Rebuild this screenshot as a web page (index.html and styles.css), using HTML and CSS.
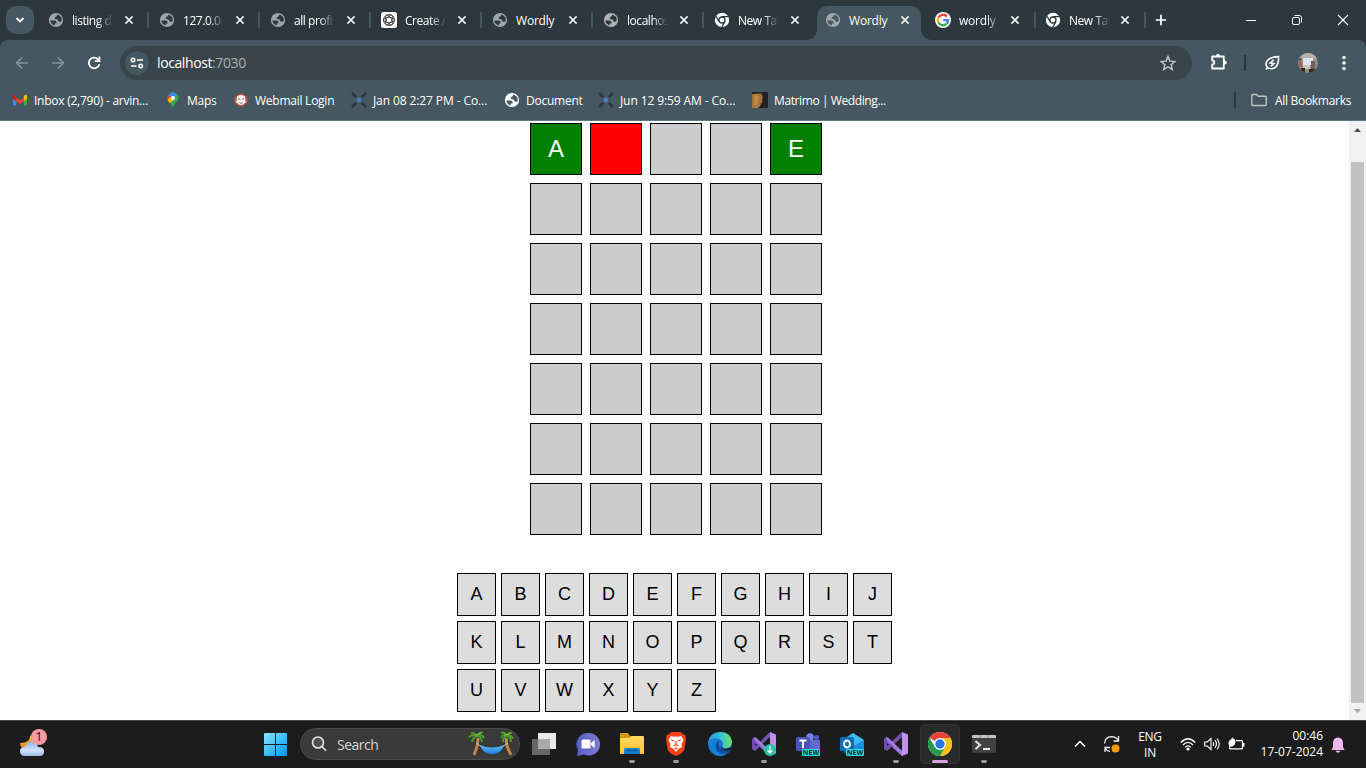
FILE: index.html
```html
<!DOCTYPE html>
<html lang="en">
<head>
<meta charset="utf-8">
<title>Wordly</title>
<link rel="stylesheet" href="styles.css">
</head>
<body>
<svg class="defs" width="0" height="0" aria-hidden="true">
  <defs>
    <linearGradient id="win" x1="0" y1="0" x2="1" y2="1"><stop offset="0" stop-color="#8ae2ff"/><stop offset=".5" stop-color="#3fc0fb"/><stop offset="1" stop-color="#0a94f4"/></linearGradient>
    <linearGradient id="cloud" x1="0" y1="0" x2="0" y2="1"><stop offset="0" stop-color="#8fb1ee"/><stop offset=".6" stop-color="#d3e1fa"/><stop offset="1" stop-color="#9dbcf2"/></linearGradient>
    <linearGradient id="moon" x1="0" y1="0" x2="0" y2="1"><stop offset="0" stop-color="#f6c83c"/><stop offset="1" stop-color="#ec8115"/></linearGradient>
    <linearGradient id="fold" x1="0" y1="0" x2="0" y2="1"><stop offset="0" stop-color="#ffda62"/><stop offset="1" stop-color="#fdc02f"/></linearGradient>
    <linearGradient id="chat" x1="0" y1="0" x2="1" y2="0"><stop offset="0" stop-color="#5661c4"/><stop offset="1" stop-color="#8278cf"/></linearGradient>
    <linearGradient id="edge" x1="0" y1="0" x2="1" y2="0"><stop offset="0" stop-color="#2295e2"/><stop offset=".5" stop-color="#35c1dc"/><stop offset="1" stop-color="#6de05e"/></linearGradient>
    <linearGradient id="vsr" x1="0" y1="0" x2="0" y2="1"><stop offset="0" stop-color="#b994ea"/><stop offset="1" stop-color="#c98ff5"/></linearGradient>
    <linearGradient id="ham" x1="0" y1="0" x2="0" y2="1"><stop offset="0" stop-color="#64bdf4"/><stop offset="1" stop-color="#1482e5"/></linearGradient>
  </defs>
  <symbol id="globe" viewBox="0 0 16 16"><circle cx="8" cy="8" r="7.1" fill="currentColor"/><path d="M2.3 8.600h4.200q2 .2 2 1.600v1.200H6.700v2.200Q3 12.700 2.300 8.600zM9.300 2.600q-.2 2-1.400 2.100-1.500.1-1.200 1.500.2 1.100 1.900 1.100 1.600.1 1.800 1.600.2 1.200 3 .7 1.700-4.800-4.100-7z" fill="var(--hole)"/></symbol>
  <symbol id="x" viewBox="0 0 10 10"><path d="M1.400 1.400l7.200 7.200M8.600 1.400L1.400 8.600" stroke="#eef2f3" stroke-width="1.600"/></symbol>
  <symbol id="mono" viewBox="0 0 16 16"><circle cx="8" cy="8" r="7.200" fill="#fff"/><circle cx="8" cy="8" r="3" fill="#fff" stroke="#2d383e" stroke-width="1.300"/><path d="M8 4.600h6.500M5.100 9.700L2 4.300M10.900 9.700l-3.100 5.300" stroke="#2d383e" stroke-width="1.300"/></symbol>
  <symbol id="cross" viewBox="0 0 16 16"><path d="M1 1l4.200 4.200M15 1l-4.200 4.200M1 15l4.200-4.200M15 15l-4.200-4.200" stroke="#2f3942" stroke-width="2.800"/><circle cx="8" cy="8" r="2.300" fill="#4b7bc8"/></symbol>
  <symbol id="vs" viewBox="0 0 24 24"><path d="M0 7l3-1.600L18 19v5L2 10z" fill="#8661c5"/><path d="M0 7l3-1.500V18.500L0 17z" fill="#6e4bb0"/><path d="M0 17l3 2L18 5V0z" fill="#7451b3"/><path d="M1 5.500h3L18 19v5z" fill="#a07fe0"/><path d="M18 0l6 2.600v18.800L18 24z" fill="url(#vsr)"/></symbol>
</svg>

<div class="browser">
  <header class="tabstrip">
    <button class="tab-search"><svg width="12" height="12" viewBox="0 0 12 12"><path d="M2.500 4L6 7.500 9.500 4" fill="none" stroke="#fff" stroke-width="1.900"/></svg></button>
    <div class="tabs">
      <div class="tab"><svg class="ico"><use href="#globe"/></svg><span class="title fade">listing d</span><svg class="close"><use href="#x"/></svg></div>
      <div class="tab"><svg class="ico"><use href="#globe"/></svg><span class="title fade">127.0.0.</span><svg class="close"><use href="#x"/></svg></div>
      <div class="tab"><svg class="ico"><use href="#globe"/></svg><span class="title fade">all profi</span><svg class="close"><use href="#x"/></svg></div>
      <div class="tab"><svg class="ico" viewBox="0 0 16 16"><rect width="16" height="16" rx="2.500" fill="#fff"/><g fill="none" stroke="#303030" stroke-width=".8"><circle cx="8" cy="8" r="5.600"/><ellipse cx="8" cy="8" rx="5.400" ry="2.700"/><ellipse cx="8" cy="8" rx="5.400" ry="2.700" transform="rotate(60 8 8)"/><ellipse cx="8" cy="8" rx="5.400" ry="2.700" transform="rotate(120 8 8)"/></g></svg><span class="title fade">Create A</span><svg class="close"><use href="#x"/></svg></div>
      <div class="tab"><svg class="ico"><use href="#globe"/></svg><span class="title">Wordly</span><svg class="close"><use href="#x"/></svg></div>
      <div class="tab"><svg class="ico warm"><use href="#globe"/></svg><span class="title fade">localhos</span><svg class="close"><use href="#x"/></svg></div>
      <div class="tab no-sep"><svg class="ico"><use href="#mono"/></svg><span class="title fade">New Tal</span><svg class="close"><use href="#x"/></svg></div>
      <div class="tab active"><svg class="ico"><use href="#globe"/></svg><span class="title">Wordly</span><svg class="close"><use href="#x"/></svg></div>
      <div class="tab narrow"><svg class="ico" viewBox="0 0 16 16"><circle cx="8" cy="8" r="8" fill="#fff"/><g fill="none" stroke-width="2.300"><path d="M12 4.600A5.200 5.200 0 0 0 3.400 5.600" stroke="#ea4335"/><path d="M3.400 5.600a5.200 5.200 0 0 0 0 4.800" stroke="#fbbc05"/><path d="M3.400 10.400a5.200 5.200 0 0 0 8.100 1.500" stroke="#34a853"/><path d="M11.500 11.900A5 5 0 0 0 13.100 8.100H8.200" stroke="#4285f4"/></g></svg><span class="title fade slight">wordly</span><svg class="close"><use href="#x"/></svg></div>
      <div class="tab narrow"><svg class="ico"><use href="#mono"/></svg><span class="title fade">New Tal</span><svg class="close"><use href="#x"/></svg></div>
    </div>
    <svg class="new-tab" viewBox="0 0 12 12"><path d="M6 .8v10.400M.8 6h10.400" stroke="#fff" stroke-width="1.700"/></svg>
    <div class="window-controls">
      <svg viewBox="0 0 12 12"><path d="M1 6.500h10" stroke="#fff"/></svg>
      <svg viewBox="0 0 12 12" fill="none" stroke="#fff"><rect x="1.500" y="3.500" width="7" height="7" rx="1.500"/><path d="M3.500 1.500h5q2 0 2 2v5"/></svg>
      <svg viewBox="0 0 12 12"><path d="M1 1l10 10M11 1L1 11" stroke="#fff" stroke-width="1.100"/></svg>
    </div>
  </header>

  <div class="chrome-panel">
    <div class="toolbar">
      <svg class="nav dim" viewBox="0 0 14 14"><path d="M13 7H1.800M7 1.600L1.600 7 7 12.400" /></svg>
      <svg class="nav dim" viewBox="0 0 14 14"><path d="M1 7h11.200M7 1.600L12.400 7 7 12.400"/></svg>
      <svg class="nav" viewBox="0 0 14 14"><path d="M12.300 8.200A5.300 5.300 0 1 1 11 3.300L12.300 4.600M12.400 .6v4.600H7.800"/></svg>
      <div class="omnibox">
        <span class="site"><svg width="14" height="12" viewBox="0 0 14 12" fill="none" stroke="#fff" stroke-width="1.600"><circle cx="3" cy="3" r="1.700"/><path d="M7 3h6M1 9h5.500"/><circle cx="10.700" cy="9" r="1.700"/></svg></span>
        <span class="url">localhost<span>:7030</span></span>
        <svg class="star" viewBox="0 0 16 16"><path d="M8 1.500l1.900 4.600 4.900.4-3.700 3.200 1.100 4.800L8 11.900l-4.200 2.600 1.100-4.800L1.200 6.500l4.900-.4z" fill="none" stroke="#c3c6c8" stroke-width="1.400"/></svg>
      </div>
      <svg class="puzzle" viewBox="0 0 18 18"><path d="M2.200 3.500h11.600v12H2.200v-4q2.100-.1 2.100-2T2.200 7.500z" fill="none" stroke="#fff" stroke-width="1.800" stroke-linejoin="round"/><path d="M5.800 3.200q.3-2.500 2.200-2.500t2.200 2.500zM14 7.200q2.900.3 2.900 2.300T14 11.800z" fill="#fff"/></svg>
      <i class="vline"></i>
      <svg class="leaf" viewBox="0 0 16 16" fill="none" stroke="#fff"><path d="M2 14.600l1.500-2C-.2 8 3.500 1.700 14.500 1.600c.5 8.500-3.500 14.700-11 11" stroke-width="1.600"/><path d="M9.700 4.800L6.200 8.200l4 .2-3.500 3" stroke-width="1.500"/></svg>
      <svg class="avatar" viewBox="0 0 20 20"><defs><clipPath id="av"><circle cx="10" cy="10" r="10"/></clipPath></defs><g clip-path="url(#av)"><path d="M0 0h20v20H0z" fill="#9b8a80"/><path d="M0 0h20v6L10 5 4 8H0z" fill="#b9b0a9"/><path d="M5 5h10v7H5z" fill="#dce3ec"/><path d="M1 9h3v5H1zM8 12h3v3H8z" fill="#a4605b"/><path d="M5 12h7v4H5z" fill="#c9c3be"/><path d="M13 8h4v9h-4z" fill="#6a625b"/><path d="M3 15h4v5H3zM11 16h7v4h-7z" fill="#34291f"/><path d="M0 5h4v3H0z" fill="#6f6260"/></g></svg>
      <svg class="dots" viewBox="0 0 4 16"><g fill="#fff"><circle cx="2" cy="2.500" r="1.700"/><circle cx="2" cy="8" r="1.700"/><circle cx="2" cy="13.500" r="1.700"/></g></svg>
    </div>
    <nav class="bookmarks">
      <a><svg viewBox="0 0 16 16"><path d="M1 4v9.500h3.200V7z" fill="#4285f4"/><path d="M11.800 7v6.500H15V4z" fill="#34a853"/><path d="M1 3.500L8 8.500l7-5V7l-7 5L1 7z" fill="#ea4335"/><path d="M1 3.500q1-1.500 3.200.3V9L1 7z" fill="#c5221f"/><path d="M15 3.500q-1-1.500-3.200.3V9L15 7z" fill="#fbbc04"/></svg><span>Inbox (2,790) - arvin...</span></a>
      <a><svg viewBox="0 0 16 16"><path d="M8 .5a5.500 5.500 0 0 0-5.500 5.500Q2.500 9 5 11q2.300 2 3 5 .7-3 3-5.200 2.500-2.400 2.500-4.800A5.500 5.500 0 0 0 8 .5z" fill="#34a853"/><path d="M3.500 2.700L6 6 3 9Q1.500 5.500 3.500 2.700z" fill="#ea4335"/><path d="M2.600 7.500L6.500 5l3 2.500L5 11Q2.700 9 2.600 7.500z" fill="#fbbc04"/><path d="M3.800 2.500Q8-1.500 12.500 3L8.500 7 6 5.500z" fill="#4285f4"/><circle cx="8" cy="6" r="2" fill="#fff"/></svg><span>Maps</span></a>
      <a><svg viewBox="0 0 16 16"><circle cx="8" cy="8" r="6.200" fill="#b9867a" stroke="#a54a35" stroke-width="1.500"/><path d="M4 4.500q4-3 8 0v6q-4 5-8 0z" fill="#f4efee"/><path d="M5 7h2M9 7h2M6.500 11h3" stroke="#9b5f57"/><path d="M2.500 9l2 2M13.500 9l-2 2" stroke="#eee"/></svg><span>Webmail Login</span></a>
      <a class="wide"><svg><use href="#cross"/></svg><span>Jan 08 2:27 PM - Co...</span></a>
      <a><svg class="white"><use href="#globe"/></svg><span>Document</span></a>
      <a class="wide"><svg><use href="#cross"/></svg><span>Jun 12 9:59 AM - Co...</span></a>
      <a class="tight"><svg viewBox="0 0 16 16"><path d="M0 0h16v16H0z" fill="#232126"/><path d="M0 2l9-.5q3 3.500 1 6.500 1 2-1 4-1 3-3 4H0z" fill="#a87335"/><path d="M2 3l5 1-1 8-4 2z" fill="#bd8748"/></svg><span>Matrimo | Wedding...</span></a>
      <i class="vline"></i>
      <a class="all"><svg viewBox="0 0 16 16"><path d="M.8 12.500v-9q0-1 1-1h3.700l1.800 1.800h7q1 0 1 1v7.200q0 1-1 1H1.800q-1 0-1-1z" fill="none" stroke="#c0c3c4" stroke-width="1.400"/></svg><span>All Bookmarks</span></a>
    </nav>
  </div>

  <div class="viewport">
    <main class="page">
      <section class="board">
        <div class="cell hit">A</div><div class="cell miss"></div><div class="cell"></div><div class="cell"></div><div class="cell hit">E</div>
        <div class="cell"></div><div class="cell"></div><div class="cell"></div><div class="cell"></div><div class="cell"></div>
        <div class="cell"></div><div class="cell"></div><div class="cell"></div><div class="cell"></div><div class="cell"></div>
        <div class="cell"></div><div class="cell"></div><div class="cell"></div><div class="cell"></div><div class="cell"></div>
        <div class="cell"></div><div class="cell"></div><div class="cell"></div><div class="cell"></div><div class="cell"></div>
        <div class="cell"></div><div class="cell"></div><div class="cell"></div><div class="cell"></div><div class="cell"></div>
        <div class="cell"></div><div class="cell"></div><div class="cell"></div><div class="cell"></div><div class="cell"></div>
      </section>
      <section class="keyboard">
        <div class="key">A</div><div class="key">B</div><div class="key">C</div><div class="key">D</div><div class="key">E</div><div class="key">F</div><div class="key">G</div><div class="key">H</div><div class="key">I</div><div class="key">J</div>
        <div class="key">K</div><div class="key">L</div><div class="key">M</div><div class="key">N</div><div class="key">O</div><div class="key">P</div><div class="key">Q</div><div class="key">R</div><div class="key">S</div><div class="key">T</div>
        <div class="key">U</div><div class="key">V</div><div class="key">W</div><div class="key">X</div><div class="key">Y</div><div class="key">Z</div>
      </section>
    </main>
    <div class="scrollbar">
      <svg viewBox="0 0 17 17"><path d="M5 11l3.500-4 3.500 4z" fill="#505050"/></svg>
      <i class="thumb"></i>
      <svg viewBox="0 0 17 17"><path d="M5 6l3.500 4L12 6z" fill="#a3a3a3"/></svg>
    </div>
  </div>

  <footer class="taskbar">
    <div class="weather">
      <svg width="26" height="28" viewBox="0 0 26 28"><path d="M11 4q1 9-10 9 0 6 8 7l8-9q-5-2-6-7z" fill="url(#moon)"/><path d="M6 26q-5 0-5-5 0-4 5-4 2-6 7-5 5 0 6 5 6-.5 6 4.500 0 4.500-5 4.500z" fill="url(#cloud)"/></svg>
      <b class="badge">1</b>
    </div>
    <svg class="start" viewBox="0 0 23 23"><path d="M0 1q0-1 1-1h10v11H0zM12 0h10q1 0 1 1v10H12zM0 12h11v11H1q-1 0-1-1zM12 12h11v10q0 1-1 1H12z" fill="url(#win)"/></svg>
    <div class="search">
      <svg width="16" height="16" viewBox="0 0 16 16" fill="none" stroke="#e2e2e2" stroke-width="1.600"><circle cx="7" cy="6.500" r="5.500" fill="#505050"/><path d="M11 10.500l4 4.200"/></svg>
      <span>Search</span>
      <svg class="palms" width="46" height="26" viewBox="0 0 46 26"><path d="M10 7q0 8-4 17M38 7q0 8 5 17" fill="none" stroke="#c88748" stroke-width="2.800"/><path d="M8 12l6 4M40 12l-6 4" stroke="#b8c4cc"/><path d="M12 14q12 5 24 0-3 9-12 9t-12-9z" fill="url(#ham)"/><g fill="none" stroke="#4b9a2b" stroke-width="2"><path d="M9 5Q5 1 3 2.500M9 5Q3 3 1 6.500M9 5Q5 6 4 11M9 5q3-5 6-3M9 5q5-2 7 2M9 5q4 0 5 6M39 5q-3-5-6-3M39 5q-5-2-6 2M39 5q-4 1-4 6M39 5q2-5 5-2.500M39 5q4-1 6 2.500M39 5q4 1 4 6"/></g><path d="M7 4l6-1.500M36 4l6-1" stroke="#8cc63f" stroke-width="1.200"/></svg>
    </div>
    <div class="apps">
      <div class="app"><svg viewBox="0 0 24 24"><path d="M6 1h18v16H6z" fill="#e9e9e9"/><path d="M0 7h18v16H0z" fill="#747474" opacity=".85"/><path d="M6 7h12v10H6z" fill="#aaa"/></svg></div>
      <div class="app chat"><svg viewBox="0 0 24 24"><path d="M12 1a11.300 11.300 0 1 1-4 21.500L1 24l1-6A11.300 11.300 0 0 1 12 1z" fill="url(#chat)"/><rect x="5.500" y="7.500" width="9" height="9" rx="1.500" fill="#fff"/><path d="M15 11l3.700-3v8L15 13z" fill="#fff"/></svg></div>
      <div class="app open"><svg viewBox="0 0 24 24"><path d="M0 2q0-1 1-1h7l2 3v4H0z" fill="#d69b0d"/><path d="M0 6h9l2-2h12q1 0 1 1v17H0z" fill="url(#fold)"/><path d="M4 22v-4q0-2 2-2h12q2 0 2 2v4z" fill="#197fce"/><path d="M7 18.500h10" stroke="#0f5c9e" stroke-width="1.500"/></svg></div>
      <div class="app open"><svg viewBox="0 0 24 24"><path d="M7 0h10l2 2.500h2L22 6l-1.500 11q-1 4-8.500 7-7.500-3-8.500-7L2 6l1-3.500h2z" fill="#fa3e15"/><path d="M7 4l3 .8 2-.3 2 .3 3-.8 2.500 4-2 4 .5 3-3 1.500L12 20l-3-3.500L6 15l.5-3-2-4z" fill="#fff"/><path d="M7 8l3.500 1M17 8l-3.500 1M12 9v4M9.500 14l2.500-1.500 2.500 1.500M10.500 17l1.500-1 1.500 1" fill="none" stroke="#fa3e15" stroke-width="1.200"/></svg></div>
      <div class="app"><svg viewBox="0 0 24 24"><circle cx="12" cy="12" r="12" fill="#1674cf"/><path d="M.3 10Q2 0 12 0q11 0 12 9.500 0 6-6 6.500-4 0-3.500-2.300 1.500-2.200-.5-4.700Q7.500 3.200.3 10z" fill="url(#edge)"/><path d="M.2 10Q5 5 11 8q-4 3-3 8 2 6 8 7.300Q5 26 .8 15z" fill="#167fd7"/><path d="M11 8q-5 4-2.500 9.500Q12 24 20.500 20q2-1 2-2-5 2-9.500-1-4-3-2-9z" fill="#114a99"/><path d="M13 14q1 3 5 3 3.500 0 6-3-.5 2-1.500 4-5 2-9-1.500-1.500-1.500-.5-2.500z" fill="#1d1d1d"/></svg></div>
      <div class="app open"><svg viewBox="0 0 24 24"><use href="#vs" width="24" height="24"/><circle cx="18" cy="18" r="6" fill="#23bfa7"/><path d="M18 14v7M15.500 18.500L18 21l2.500-2.500" stroke="#fff" stroke-width="1.300" fill="none"/></svg></div>
      <div class="app"><svg viewBox="0 0 24 24"><circle cx="14" cy="5" r="3.700" fill="#7b83eb"/><circle cx="20.500" cy="5.500" r="2.600" fill="#5059c9"/><path d="M10 8h14v9q0 5-7 5t-7-5z" fill="#6169cf"/><rect y="5" width="14" height="14" rx="1.500" fill="#4b53bc"/><path d="M3.500 8.500h7M7 8.500V16" stroke="#fff" stroke-width="2"/></svg><b class="new">NEW</b></div>
      <div class="app"><svg viewBox="0 0 24 24"><path d="M4 7l9-6 11 7v13H4z" fill="#1264b5"/><path d="M7 5l6-4 11 7-9 6z" fill="#43b8ef"/><path d="M14 14L24 8v11H11z" fill="#1a8fe0"/><rect y="5" width="14" height="14" rx="1.500" fill="#0f6cbd"/><ellipse cx="7" cy="12" rx="3" ry="3.500" fill="none" stroke="#fff" stroke-width="1.900"/></svg><b class="new">NEW</b></div>
      <div class="app open"><svg><use href="#vs"/></svg></div>
      <div class="app current"><svg viewBox="0 0 24 24"><circle cx="12" cy="12" r="12" fill="#fff"/><path d="M12 12L1.600 6A12 12 0 0 1 22.400 6z" fill="#ea4335"/><path d="M12 6h10.400A12 12 0 0 1 12 24l5-9z" fill="#fbc116"/><path d="M1.600 6A12 12 0 0 0 12 24l5.200-9L7 15z" fill="#279847"/><circle cx="12" cy="12" r="6" fill="#fff"/><circle cx="12" cy="12" r="4.700" fill="#2b78e4"/></svg></div>
      <div class="app open"><svg viewBox="0 0 24 24"><rect y="3" width="24" height="18" rx="1" fill="#414141"/><path d="M0 6V4q0-1 1-1h22q1 0 1 1v2z" fill="#c4c4c4"/><path d="M8 3v3M16 3v3" stroke="#888"/><path d="M3.500 9l4.500 4-4.500 4" fill="none" stroke="#ddd" stroke-width="2.200"/><path d="M11 17h7" stroke="#fff" stroke-width="1.800"/></svg></div>
    </div>
    <div class="tray">
      <svg class="chev" viewBox="0 0 12 12"><path d="M1 8.500l5-5 5 5" fill="none" stroke="#fff" stroke-width="1.500"/></svg>
      <svg class="sync" viewBox="0 0 18 18"><g fill="none" stroke="#f2f2f2" stroke-width="1.300"><path d="M1.500 8.500Q2 2 8.500 1.700q4.500 0 7 4M15.500 1v5h-5M2 17v-4.500h5M2 13q2 3 5 3.700"/></g><circle cx="12.500" cy="13.500" r="4" fill="#ff9a0c"/></svg>
      <div class="lang">ENG<br>IN</div>
      <svg class="wifi" viewBox="0 0 16 14"><g fill="none" stroke="#fff" stroke-width="1.300"><path d="M.8 5.500q7.200-7.500 14.400 0M3 8q5-5.200 10 0M5.200 10.400q2.800-3 5.600 0"/></g><circle cx="8" cy="12" r="1.600" fill="#fff"/></svg>
      <svg class="sound" viewBox="0 0 16 14"><g fill="none" stroke="#fff" stroke-width="1.100"><path d="M.7 5v4h2.500L7 12.500v-11L3.200 5z"/><path d="M9 5q1.500 2 0 4M11 3.200q3 3.800 0 7.600M13 1.500q4.500 5.500 0 11"/></g></svg>
      <svg class="battery" viewBox="0 0 17 14"><path d="M8 3.600h5.500q1 0 1 1v6.300q0 1-1 1H3q-1.500 0-1.500-1.500" fill="none" stroke="#fff" stroke-width="1.300"/><path d="M14.800 6h1.700v3.500h-1.700z" fill="#fff"/><path d="M1 8.500Q-.8 4 4.500 1L5 .3 5.500 2 7 2.500Q8.500 8 4 9.500l-2 .2-1 1.800z" fill="#fff"/></svg>
      <div class="clock">00:46<br>17-07-2024</div>
      <svg class="bell" viewBox="0 0 14 16"><path d="M7 .5q4.800.3 5 5.500v4l1.600 3H.4L2 10V6Q2.200.8 7 .5zM4.500 13.800h5Q9 15.700 7 15.700t-2.500-1.900z" fill="#f1b9f1"/></svg>
    </div>
  </footer>
</div>
</body>
</html>
```
FILE: styles.css
```css
* { box-sizing: border-box; }
body { margin: 0; overflow: hidden; font-family: "Open Sans", "Noto Sans", sans-serif; font-size: 12px; color: #fff; }
.defs { position: absolute; }
svg { display: block; flex: none; }
button { border: 0; padding: 0; }

.browser { width: 1366px; height: 768px; display: flex; flex-direction: column; background: #2d383e; --hole: #2d383e; }

/* Tab strip */
.tabstrip { height: 40px; display: flex; align-items: center; }
.tab-search { width: 28px; height: 28px; margin: 0 7px 0 6px; border-radius: 10px; background: #455760; display: grid; place-items: center; }
.tabs { display: flex; height: 40px; }
.tab { position: relative; width: 111px; height: 40px; padding-left: 7px; display: flex; align-items: center; }
.tab.narrow { width: 110px; }
.tab:not(.active):not(.no-sep)::after { content: ""; position: absolute; left: 106px; top: 12px; width: 2px; height: 16px; background: #455760; }
.ico { width: 16px; height: 16px; color: #a0a4ab; }
.ico.warm { color: #b4b2b1; }
.title { width: 42px; margin-left: 8px; line-height: 18px; white-space: nowrap; letter-spacing: -0.2px; padding-top: 1px; }
.fade { letter-spacing: -0.45px; -webkit-mask-image: linear-gradient(90deg, #000 60%, transparent 98%); mask-image: linear-gradient(90deg, #000 60%, transparent 98%); }
.fade.slight { letter-spacing: -0.2px; -webkit-mask-image: linear-gradient(90deg, #000 65%, #0004 90%); mask-image: linear-gradient(90deg, #000 65%, #0004 90%); }
.close { width: 10px; height: 10px; margin-left: 10px; }
.tab.narrow .close, .tab.active .close { margin-left: 9px; }
.tab.active { width: 110px; --hole: #455760; z-index: 0; }
.tab.active::before { content: ""; position: absolute; z-index: -1; left: -1px; top: 6px; width: 104px; height: 34px; border-radius: 10px 10px 0 0; background: #455760; }
.tab.active::after { content: ""; position: absolute; z-index: -1; left: -11px; bottom: 0; width: 124px; height: 10px; background: radial-gradient(circle at 0 0, transparent 9.500px, #455760 10px) left / 10px 10px no-repeat, radial-gradient(circle at 100% 0, transparent 9.500px, #455760 10px) right / 10px 10px no-repeat; }
.new-tab { width: 12px; height: 12px; margin-left: 7px; }
.window-controls { margin-left: auto; padding-right: 17px; display: flex; gap: 34px; }
.window-controls svg { width: 12px; height: 12px; }

/* Toolbar and bookmarks */
.chrome-panel { height: 81px; background: #455760; border-bottom: 1px solid #667681; border-radius: 8px 8px 0 0; --hole: #455760; }
.toolbar { height: 46px; display: flex; align-items: center; padding-left: 15px; }
.nav { width: 14px; height: 14px; margin-right: 22px; fill: none; stroke: #fff; stroke-width: 1.800; }
.nav.dim { stroke: #87939a; stroke-width: 1.600; }
.nav:nth-child(3) { margin-right: 19px; }
.omnibox { width: 1072px; height: 34px; padding: 0 16px 0 5px; border-radius: 17px; background: #39444b; display: flex; align-items: center; }
.site { width: 24px; height: 24px; border-radius: 50%; background: #455760; display: grid; place-items: center; }
.url { margin-left: 8px; padding-bottom: 1px; font-size: 14px; letter-spacing: -0.4px; }
.url span { color: #a5adb1; }
.star { width: 16px; height: 16px; margin-left: auto; }
.puzzle { width: 18px; height: 18px; margin: 0 0 2px 18px; }
.vline { width: 2px; height: 16px; background: #2d383e; }
.toolbar .vline { margin-left: 16px; }
.leaf { width: 16px; height: 16px; margin-left: 18px; }
.avatar { width: 20px; height: 20px; margin-left: 18px; }
.dots { width: 4px; height: 16px; margin-left: 24px; }
.bookmarks { height: 28px; padding-left: 12px; display: grid; grid-template-columns: 153px 68px 118px 153px 94px 154px 482px 17px auto; align-items: center; }
.bookmarks a { display: flex; align-items: center; gap: 6px; height: 28px; white-space: nowrap; letter-spacing: -0.25px; }
.bookmarks .wide { letter-spacing: -0.1px; }
.bookmarks .tight { letter-spacing: -0.4px; }
.bookmarks a svg { width: 16px; height: 16px; }
.bookmarks .white { color: #fff; }
.bookmarks .all { gap: 8px; letter-spacing: -0.3px; }

/* Page */
.viewport { height: 599px; display: flex; background: #fff; color: #000; font-family: Arial, "Liberation Sans", sans-serif; }
.page { flex: 1; padding-top: 2px; }
.board { width: 292px; margin-left: 530px; display: grid; grid-template-columns: repeat(5, 52px); gap: 8px; }
.cell { height: 52px; border: 1px solid #000; background: #ccc; font-size: 24px; display: grid; place-items: center; }
.hit { background: #008000; color: #fff; }
.miss { background: #f00; }
.keyboard { margin: 38px 0 0 457px; display: grid; grid-template-columns: repeat(10, 39px); gap: 5px; }
.key { height: 43px; border: 1px solid #000; background: #ddd; font-size: 18px; display: grid; place-items: center; }
.scrollbar { width: 17px; background: #f1f1f1; display: flex; flex-direction: column; align-items: center; }
.scrollbar svg { width: 17px; height: 17px; }
.thumb { width: 13px; height: 541px; margin-top: 24px; background: #c1c1c1; }

/* Taskbar */
.taskbar { height: 48px; display: flex; align-items: center; background: #1c1c1c; border-top: 1px solid #454545; }
.weather { position: relative; width: 26px; margin: -2px 0 0 19px; }
.badge { position: absolute; left: 12px; top: -1px; width: 16px; height: 16px; border-radius: 50%; background: #fe99a4; color: #111; font-size: 12px; font-weight: 400; line-height: 16px; text-align: center; }
.start { width: 23px; height: 23px; margin: -1px 0 0 219px; }
.search { width: 220px; height: 32px; margin: -1px 0 0 13px; padding: 0 5px 0 10px; border: 1px solid #4b4b4b; border-radius: 16px; background: #3a3a3a; display: flex; align-items: center; color: #d5d5d5; font-size: 14px; letter-spacing: -0.5px; }
.search span { margin-left: 10px; }
.palms { margin-left: auto; }
.apps { display: flex; margin: -1px 0 0 2px; }
.app { position: relative; width: 44px; height: 40px; display: grid; place-items: center; }
.app > svg { width: 24px; height: 24px; }
.chat > svg { margin-right: 1px; }
.open::after, .current::after { content: ""; position: absolute; left: 19px; top: 36px; width: 6px; height: 3px; border-radius: 2px; background: #9a9a9a; }
.current::before { content: ""; position: absolute; inset: 0 2px; border: 1px solid #303030; border-radius: 4px; background: #2a2a2a; }
.current > svg { position: relative; }
.current::after { left: 14px; width: 16px; background: #dca1e3; }
.new { position: absolute; left: 16px; top: 25px; width: 18px; height: 7px; border-radius: 1px; background: #28dfe2; color: #102a2c; font: bold 7px/7px "Open Sans", sans-serif; text-align: center; }
.tray { margin-left: auto; display: flex; align-items: center; margin-top: -2px; padding-right: 21px; line-height: 16px; }
.chev { width: 12px; height: 12px; }
.sync { width: 18px; height: 18px; margin-left: 17px; }
.lang { width: 30px; margin: 2px 0 0 14px; text-align: center; letter-spacing: -0.3px; }
.wifi { width: 16px; height: 14px; margin-left: 15px; }
.sound { width: 16px; height: 14px; margin-left: 8px; }
.battery { width: 17px; height: 14px; margin-left: 8px; }
.clock { width: 72px; margin-left: 6px; text-align: right; white-space: nowrap; letter-spacing: -0.02px; }
.bell { width: 14px; height: 16px; margin: 2px 0 0 8px; }
```
